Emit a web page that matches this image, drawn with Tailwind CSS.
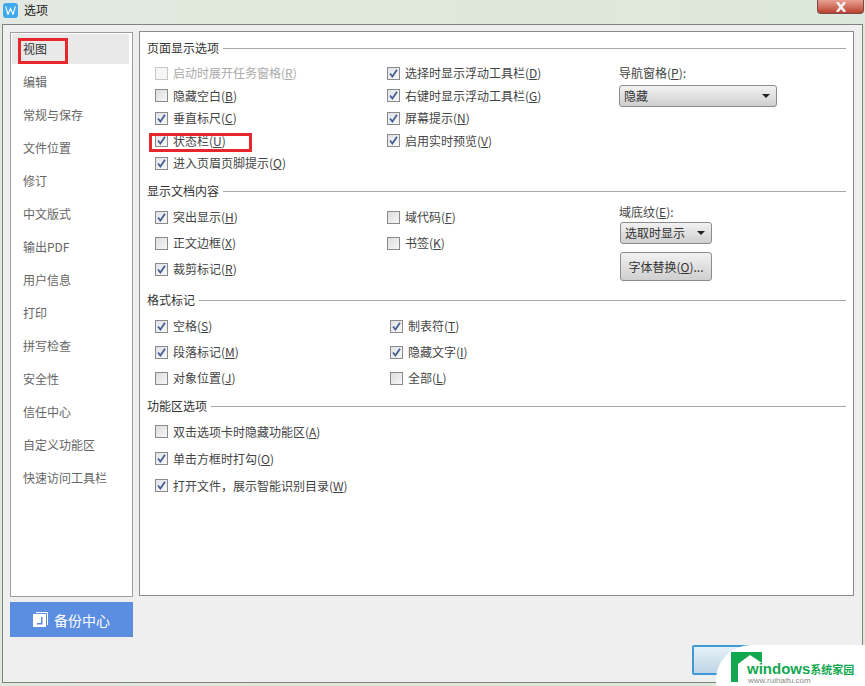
<!DOCTYPE html>
<html lang="zh-CN">
<head>
    <meta charset="UTF-8">
    <title>选项</title>
    <script src="https://cdn.jsdelivr.net/npm/@tailwindcss/browser@4"></script>
</head>
<body class="bg-[#dfe8dc]">
<div class="relative w-[865px] h-[686px] overflow-hidden flex flex-col bg-gradient-to-r from-[#e3e9e0] via-[#dfe8da] to-[#dde8dc] text-[12px] leading-[16px] text-[#444] font-['Noto_Sans_CJK_SC','Liberation_Sans',sans-serif]">

    <!-- title bar -->
    <header class="h-[24px] shrink-0 flex items-start pl-[3px] pt-[2px]">
        <div class="mt-[1px] w-[15px] h-[15px] rounded-[3px] bg-[#3fa9f0] flex items-center justify-center">
            <svg width="11" height="9" viewBox="0 0 11 9" fill="none" stroke="#fff" stroke-width="1.1"><path d="M.7.5l2.3 8L5.5 2.5l2.5 6L10.300.5"/></svg>
        </div>
        <span class="ml-[6px] text-[12px] leading-[16px] text-[#222]">选项</span>
        <div class="ml-auto mr-[1px] -mt-[2px] w-[47px] h-[14px] rounded-b-[4px] border border-[#7d4a45] border-t-0 bg-gradient-to-b from-[#e8a093] to-[#b9402f] flex items-center justify-center">
            <svg width="12" height="10" viewBox="0 0 12 10" fill="none" stroke="#f4f4f4" stroke-width="2.6"><path d="M2 0l8 10M10 0L2 10"/></svg>
        </div>
    </header>

    <!-- dialog body -->
    <div class="mx-[2px] h-[659px] border border-[#7d8578] bg-[#efefef] flex pl-[7px] pt-[7px] gap-[6px]">

        <!-- left column -->
        <div class="w-[123px] flex flex-col">
            <nav class="h-[565px] border border-[#a09c98] bg-white pl-[1px] pt-[1px] pr-[3px] flex flex-col text-[#666]">
                <a class="h-[30px] bg-[#e9e9e9] pl-[11px] flex items-center text-[#333]">视图</a>
                <a class="h-[33px] mt-[1px] pl-[11px] flex items-center">编辑</a>
                <a class="h-[33px] pl-[11px] flex items-center">常规与保存</a>
                <a class="h-[33px] pl-[11px] flex items-center">文件位置</a>
                <a class="h-[33px] pl-[11px] flex items-center">修订</a>
                <a class="h-[33px] pl-[11px] flex items-center">中文版式</a>
                <a class="h-[33px] pl-[11px] flex items-center">输出PDF</a>
                <a class="h-[33px] pl-[11px] flex items-center">用户信息</a>
                <a class="h-[33px] pl-[11px] flex items-center">打印</a>
                <a class="h-[33px] pl-[11px] flex items-center">拼写检查</a>
                <a class="h-[33px] pl-[11px] flex items-center">安全性</a>
                <a class="h-[33px] pl-[11px] flex items-center">信任中心</a>
                <a class="h-[33px] pl-[11px] flex items-center">自定义功能区</a>
                <a class="h-[33px] pl-[11px] flex items-center">快速访问工具栏</a>
            </nav>
            <button class="mt-[5px] h-[35px] bg-[#5b8de0] text-white text-[14px] flex items-center justify-center gap-[6px]">
                <svg width="15" height="15" viewBox="0 0 15 15"><path fill="#fff" fill-rule="evenodd" d="M3 0h12v13h-1V1H3zM0 2h13v13H0zM8 5v6H4v1.500h5.500V5z"/></svg>
                备份中心
            </button>
        </div>

        <!-- options panel -->
        <main class="w-[715px] h-[565px] border border-[#8b8b8b] bg-white pl-[7px] pr-[7px] pt-[8px] -mt-[1px]">

            <section class="h-[143px]">
                <div class="flex items-center gap-[4px] h-[16px] text-[#333]">页面显示选项<span class="flex-1 h-px bg-[#a8a8a8]"></span></div>
                <div class="flex mt-[6px] pl-[8px]">
                    <div class="w-[232px] flex flex-col">
                        <label class="h-[22.5px] flex items-center gap-[5px] text-[#aaa]"><span class="w-[13px] h-[13px] border border-[#c8c8c8] bg-[#f6f6f6]"></span><span>启动时展开任务窗格(<u>R</u>)</span></label>
                        <label class="h-[22.5px] flex items-center gap-[5px]"><span class="w-[13px] h-[13px] border border-[#8a8a8a] bg-gradient-to-br from-[#dcdcdc] to-[#f8f8f8]"></span><span>隐藏空白(<u>B</u>)</span></label>
                        <label class="h-[22.5px] flex items-center gap-[5px]"><span class="w-[13px] h-[13px] border border-[#8a8a8a] bg-gradient-to-br from-[#dfe3ea] to-[#f8f8f8] flex items-center justify-center"><svg width="9" height="9" viewBox="0 0 9 9" fill="none" stroke="#465f8f" stroke-width="1.8"><path d="M1 4.500l2.400 3L8 .8"/></svg></span><span>垂直标尺(<u>C</u>)</span></label>
                        <label class="h-[22.5px] flex items-center gap-[5px]"><span class="w-[13px] h-[13px] border border-[#8a8a8a] bg-gradient-to-br from-[#dfe3ea] to-[#f8f8f8] flex items-center justify-center"><svg width="9" height="9" viewBox="0 0 9 9" fill="none" stroke="#465f8f" stroke-width="1.8"><path d="M1 4.500l2.400 3L8 .8"/></svg></span><span>状态栏(<u>U</u>)</span></label>
                        <label class="h-[22.5px] flex items-center gap-[5px]"><span class="w-[13px] h-[13px] border border-[#8a8a8a] bg-gradient-to-br from-[#dfe3ea] to-[#f8f8f8] flex items-center justify-center"><svg width="9" height="9" viewBox="0 0 9 9" fill="none" stroke="#465f8f" stroke-width="1.8"><path d="M1 4.500l2.400 3L8 .8"/></svg></span><span>进入页眉页脚提示(<u>Q</u>)</span></label>
                    </div>
                    <div class="w-[232px] flex flex-col">
                        <label class="h-[22.5px] flex items-center gap-[5px]"><span class="w-[13px] h-[13px] border border-[#8a8a8a] bg-gradient-to-br from-[#dfe3ea] to-[#f8f8f8] flex items-center justify-center"><svg width="9" height="9" viewBox="0 0 9 9" fill="none" stroke="#465f8f" stroke-width="1.8"><path d="M1 4.500l2.400 3L8 .8"/></svg></span><span>选择时显示浮动工具栏(<u>D</u>)</span></label>
                        <label class="h-[22.5px] flex items-center gap-[5px]"><span class="w-[13px] h-[13px] border border-[#8a8a8a] bg-gradient-to-br from-[#dfe3ea] to-[#f8f8f8] flex items-center justify-center"><svg width="9" height="9" viewBox="0 0 9 9" fill="none" stroke="#465f8f" stroke-width="1.8"><path d="M1 4.500l2.400 3L8 .8"/></svg></span><span>右键时显示浮动工具栏(<u>G</u>)</span></label>
                        <label class="h-[22.5px] flex items-center gap-[5px]"><span class="w-[13px] h-[13px] border border-[#8a8a8a] bg-gradient-to-br from-[#dfe3ea] to-[#f8f8f8] flex items-center justify-center"><svg width="9" height="9" viewBox="0 0 9 9" fill="none" stroke="#465f8f" stroke-width="1.8"><path d="M1 4.500l2.400 3L8 .8"/></svg></span><span>屏幕提示(<u>N</u>)</span></label>
                        <label class="h-[22.5px] flex items-center gap-[5px]"><span class="w-[13px] h-[13px] border border-[#8a8a8a] bg-gradient-to-br from-[#dfe3ea] to-[#f8f8f8] flex items-center justify-center"><svg width="9" height="9" viewBox="0 0 9 9" fill="none" stroke="#465f8f" stroke-width="1.8"><path d="M1 4.500l2.400 3L8 .8"/></svg></span><span>启用实时预览(<u>V</u>)</span></label>
                    </div>
                    <div class="w-[158px] mt-[3px]">
                        <div class="h-[16px] leading-[16px]">导航窗格(<u>P</u>):</div>
                        <div class="mt-[4px] w-[158px] h-[22px] rounded-[3px] border border-[#8c8c8c] bg-gradient-to-b from-[#f2f2f2] to-[#cfcfcf] flex items-center justify-between pl-[4px] pr-[6px] text-[#333]">隐藏<span class="w-0 h-0 border-x-[4px] border-x-transparent border-t-[4px] border-t-[#222]"></span></div>
                    </div>
                </div>
            </section>

            <section class="h-[109px]">
                <div class="flex items-center gap-[4px] h-[16px] text-[#333]">显示文档内容<span class="flex-1 h-px bg-[#a8a8a8]"></span></div>
                <div class="flex mt-[5px] pl-[8px]">
                    <div class="w-[232px] flex flex-col">
                        <label class="h-[26px] flex items-center gap-[5px]"><span class="w-[13px] h-[13px] border border-[#8a8a8a] bg-gradient-to-br from-[#dfe3ea] to-[#f8f8f8] flex items-center justify-center"><svg width="9" height="9" viewBox="0 0 9 9" fill="none" stroke="#465f8f" stroke-width="1.8"><path d="M1 4.500l2.400 3L8 .8"/></svg></span><span>突出显示(<u>H</u>)</span></label>
                        <label class="h-[26px] flex items-center gap-[5px]"><span class="w-[13px] h-[13px] border border-[#8a8a8a] bg-gradient-to-br from-[#dcdcdc] to-[#f8f8f8]"></span><span>正文边框(<u>X</u>)</span></label>
                        <label class="h-[26px] flex items-center gap-[5px]"><span class="w-[13px] h-[13px] border border-[#8a8a8a] bg-gradient-to-br from-[#dfe3ea] to-[#f8f8f8] flex items-center justify-center"><svg width="9" height="9" viewBox="0 0 9 9" fill="none" stroke="#465f8f" stroke-width="1.8"><path d="M1 4.500l2.400 3L8 .8"/></svg></span><span>裁剪标记(<u>R</u>)</span></label>
                    </div>
                    <div class="w-[232px] flex flex-col">
                        <label class="h-[26px] flex items-center gap-[5px]"><span class="w-[13px] h-[13px] border border-[#8a8a8a] bg-gradient-to-br from-[#dcdcdc] to-[#f8f8f8]"></span><span>域代码(<u>F</u>)</span></label>
                        <label class="h-[26px] flex items-center gap-[5px]"><span class="w-[13px] h-[13px] border border-[#8a8a8a] bg-gradient-to-br from-[#dcdcdc] to-[#f8f8f8]"></span><span>书签(<u>K</u>)</span></label>
                    </div>
                    <div class="w-[92px] ml-[1px]">
                        <div class="h-[16px] -ml-[1px]">域底纹(<u>E</u>):</div>
                        <div class="mt-[2px] w-[92px] h-[22px] rounded-[3px] border border-[#8c8c8c] bg-gradient-to-b from-[#f2f2f2] to-[#cfcfcf] flex items-center justify-between pl-[4px] pr-[6px] text-[#333]">选取时显示<span class="w-0 h-0 border-x-[4px] border-x-transparent border-t-[4px] border-t-[#222]"></span></div>
                        <button class="mt-[8px] w-[92px] h-[29px] rounded-[3px] border border-[#8c8c8c] bg-gradient-to-b from-[#f2f2f2] to-[#cfcfcf] text-[#333]">字体替换(<u>O</u>)...</button>
                    </div>
                </div>
            </section>

            <section class="h-[106px]">
                <div class="flex items-center gap-[4px] h-[16px] text-[#333]">格式标记<span class="flex-1 h-px bg-[#a8a8a8]"></span></div>
                <div class="flex mt-[5px] pl-[8px]">
                    <div class="w-[235px] flex flex-col">
                        <label class="h-[26px] flex items-center gap-[5px]"><span class="w-[13px] h-[13px] border border-[#8a8a8a] bg-gradient-to-br from-[#dfe3ea] to-[#f8f8f8] flex items-center justify-center"><svg width="9" height="9" viewBox="0 0 9 9" fill="none" stroke="#465f8f" stroke-width="1.8"><path d="M1 4.500l2.400 3L8 .8"/></svg></span><span>空格(<u>S</u>)</span></label>
                        <label class="h-[26px] flex items-center gap-[5px]"><span class="w-[13px] h-[13px] border border-[#8a8a8a] bg-gradient-to-br from-[#dfe3ea] to-[#f8f8f8] flex items-center justify-center"><svg width="9" height="9" viewBox="0 0 9 9" fill="none" stroke="#465f8f" stroke-width="1.8"><path d="M1 4.500l2.400 3L8 .8"/></svg></span><span>段落标记(<u>M</u>)</span></label>
                        <label class="h-[26px] flex items-center gap-[5px]"><span class="w-[13px] h-[13px] border border-[#8a8a8a] bg-gradient-to-br from-[#dcdcdc] to-[#f8f8f8]"></span><span>对象位置(<u>J</u>)</span></label>
                    </div>
                    <div class="w-[232px] flex flex-col">
                        <label class="h-[26px] flex items-center gap-[5px]"><span class="w-[13px] h-[13px] border border-[#8a8a8a] bg-gradient-to-br from-[#dfe3ea] to-[#f8f8f8] flex items-center justify-center"><svg width="9" height="9" viewBox="0 0 9 9" fill="none" stroke="#465f8f" stroke-width="1.8"><path d="M1 4.500l2.400 3L8 .8"/></svg></span><span>制表符(<u>T</u>)</span></label>
                        <label class="h-[26px] flex items-center gap-[5px]"><span class="w-[13px] h-[13px] border border-[#8a8a8a] bg-gradient-to-br from-[#dfe3ea] to-[#f8f8f8] flex items-center justify-center"><svg width="9" height="9" viewBox="0 0 9 9" fill="none" stroke="#465f8f" stroke-width="1.8"><path d="M1 4.500l2.400 3L8 .8"/></svg></span><span>隐藏文字(<u>I</u>)</span></label>
                        <label class="h-[26px] flex items-center gap-[5px]"><span class="w-[13px] h-[13px] border border-[#8a8a8a] bg-gradient-to-br from-[#dcdcdc] to-[#f8f8f8]"></span><span>全部(<u>L</u>)</span></label>
                    </div>
                </div>
            </section>

            <section>
                <div class="flex items-center gap-[4px] h-[16px] text-[#333]">功能区选项<span class="flex-1 h-px bg-[#a8a8a8]"></span></div>
                <div class="flex flex-col mt-[4px] pl-[8px]">
                    <label class="h-[27px] flex items-center gap-[5px]"><span class="w-[13px] h-[13px] border border-[#8a8a8a] bg-gradient-to-br from-[#dcdcdc] to-[#f8f8f8]"></span><span>双击选项卡时隐藏功能区(<u>A</u>)</span></label>
                    <label class="h-[27px] flex items-center gap-[5px]"><span class="w-[13px] h-[13px] border border-[#8a8a8a] bg-gradient-to-br from-[#dfe3ea] to-[#f8f8f8] flex items-center justify-center"><svg width="9" height="9" viewBox="0 0 9 9" fill="none" stroke="#465f8f" stroke-width="1.8"><path d="M1 4.500l2.400 3L8 .8"/></svg></span><span>单击方框时打勾(<u>O</u>)</span></label>
                    <label class="h-[27px] flex items-center gap-[5px]"><span class="w-[13px] h-[13px] border border-[#8a8a8a] bg-gradient-to-br from-[#dfe3ea] to-[#f8f8f8] flex items-center justify-center"><svg width="9" height="9" viewBox="0 0 9 9" fill="none" stroke="#465f8f" stroke-width="1.8"><path d="M1 4.500l2.400 3L8 .8"/></svg></span><span>打开文件，展示智能识别目录(<u>W</u>)</span></label>
                </div>
            </section>
        </main>
    </div>

    <!-- OK button partly hidden by the watermark -->
    <div class="absolute left-[692px] top-[645px] w-[100px] h-[30px] rounded-[2px] border-2 border-[#3f9ad6] bg-gradient-to-b from-[#e6f1f8] to-[#bfd5e6]"></div>

    <!-- red annotation boxes -->
    <div class="absolute left-[18px] top-[38px] w-[50px] h-[26px] border-[3px] border-[#e8262d]"></div>
    <div class="absolute left-[149px] top-[133px] w-[103px] h-[19px] border-[3px] border-[#e8262d]"></div>

    <!-- watermark -->
    <div class="absolute left-[716px] top-[645px] w-[200px] h-[70px] rounded-l-[36px] bg-white"></div>
    <div class="absolute left-[731px] top-[652px] w-[31px] h-[30px] bg-[#12a84f] overflow-hidden">
        <svg width="31" height="30" viewBox="0 0 31 30"><path fill="#fff" d="M7 30V12L19 3l12 8v19z"/></svg>
    </div>
    <div class="absolute left-[747px] top-[662px] h-[13px] flex items-baseline font-['Liberation_Sans',sans-serif] font-bold text-[#12a84f] text-[15px] leading-[13px] whitespace-nowrap">windows<span class="text-[11px] leading-[13px] font-['Noto_Sans_CJK_SC']">系统家园</span></div>
    <div class="absolute left-[748px] top-[676px] font-['Liberation_Sans',sans-serif] text-[#8a8a8a] text-[8px] leading-[9px] whitespace-nowrap">www.ruihaifu.com</div>
</div>
</body>
</html>
